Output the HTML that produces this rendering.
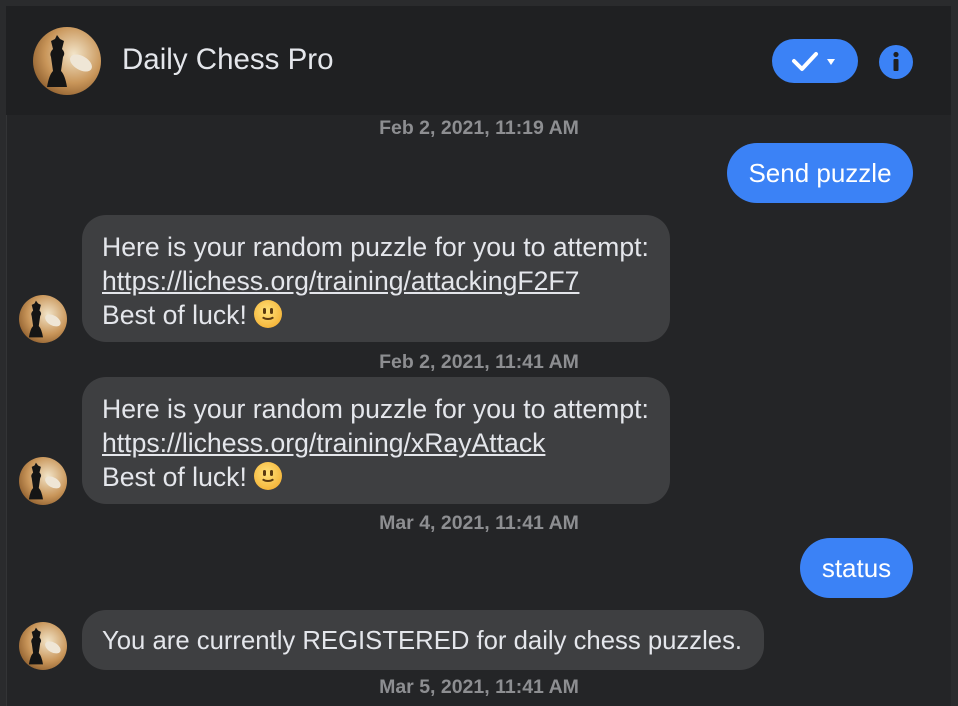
<!DOCTYPE html>
<html><head><meta charset="utf-8"><style>
*{margin:0;padding:0;box-sizing:border-box}
html,body{width:958px;height:692px;overflow:hidden;background:#2a2b2d;font-family:"Liberation Sans",Arial,sans-serif}
.frame{position:absolute;left:6px;top:6px;width:945px;height:700px;background:#242527;border-left:1px solid #333436;border-top:1px solid #38393b}
.header{position:absolute;left:6px;top:6px;width:945px;height:109px;background:#1f2022}
.abs{position:absolute}
.name{left:122px;top:43px;font-size:29.5px;color:#e4e6eb}
.ts{position:absolute;left:0;width:958px;text-align:center;color:#8d8e91;font-size:19.5px;font-weight:bold}
.bin{position:absolute;left:82px;background:#3e3f41;border-radius:24px;color:#e4e6eb;font-size:26.6px;line-height:34px;padding:14px 20px;white-space:nowrap}
.bin a{color:#e4e6eb;text-decoration:underline}
.bout{position:absolute;background:#3b82f6;color:#fff;font-size:26px;border-radius:30px;text-align:center;line-height:60px;height:60px}
.emo{display:inline-block;width:28px;height:28px;border-radius:50%;background:radial-gradient(circle at 45% 40%,#ffe27a,#f5b53a 75%);vertical-align:-4px;position:relative}
.emo:before,.emo:after{content:"";position:absolute;top:8px;width:3px;height:6px;background:#5a3a10;border-radius:2px}
.emo:before{left:9px}.emo:after{right:9px}
.emo i{position:absolute;left:6px;top:8px;width:16px;height:12px;border:2px solid transparent;border-bottom-color:#5a3a10;border-radius:50%}
</style></head><body>
<div class="frame"></div>
<div class="header"></div>
<svg width="0" height="0" style="position:absolute"><defs>
<radialGradient id="g" cx="60%" cy="40%" r="70%"><stop offset="0" stop-color="#f2e4c8"/><stop offset=".6" stop-color="#c9965a"/><stop offset="1" stop-color="#8a5a2a"/></radialGradient>
<symbol id="av" viewBox="0 0 68 68"><circle cx="34" cy="34" r="34" fill="url(#g)"/>
<ellipse cx="48" cy="36" rx="12" ry="7" fill="#efe6d6" transform="rotate(30 48 36)"/>
<path d="M14 60 Q16 48 20 44 L18 30 Q16 26 20 22 L18 14 L22 12 L24 8 L27 12 L31 14 L29 22 Q33 26 30 30 L28 44 Q32 48 34 60 Z" fill="#151515"/>
</symbol></defs></svg>
<svg class="abs" style="left:33px;top:27px" width="68" height="68"><use href="#av"/></svg>
<div class="abs name">Daily Chess Pro</div>
<div class="abs" style="left:772px;top:39px;width:86px;height:44px;border-radius:22px;background:#3b82f6"></div>
<svg class="abs" style="left:772px;top:39px" width="86" height="44"><path d="M22 22 L30 30 L44 15" stroke="#fff" stroke-width="4" fill="none" stroke-linecap="round" stroke-linejoin="round"/><path d="M55 20 L63 20 L59 26 Z" fill="#fff"/></svg>
<svg class="abs" style="left:878px;top:44px" width="36" height="36"><circle cx="18" cy="18" r="17" fill="#3b82f6"/><circle cx="18" cy="10.5" r="2.6" fill="#1f2022"/><rect x="15.5" y="15" width="5" height="12" rx="1" fill="#1f2022"/></svg>

<div class="ts" style="top:117px">Feb 2, 2021, 11:19 AM</div>
<div class="bout" style="left:727px;top:143px;width:186px">Send puzzle</div>

<svg class="abs" style="left:19px;top:295px" width="48" height="48"><use href="#av"/></svg>
<div class="bin" style="top:215px;width:588px;height:127px;padding-top:15px">Here is your random puzzle for you to attempt:<br><a>https://lichess.org/training/attackingF2F7</a><br>Best of luck! <span class="emo"><i></i></span></div>

<div class="ts" style="top:351px">Feb 2, 2021, 11:41 AM</div>
<svg class="abs" style="left:19px;top:457px" width="48" height="48"><use href="#av"/></svg>
<div class="bin" style="top:377px;width:588px;height:127px;padding-top:15px">Here is your random puzzle for you to attempt:<br><a>https://lichess.org/training/xRayAttack</a><br>Best of luck! <span class="emo"><i></i></span></div>

<div class="ts" style="top:512px">Mar 4, 2021, 11:41 AM</div>
<div class="bout" style="left:800px;top:538px;width:113px">status</div>

<svg class="abs" style="left:19px;top:622px" width="48" height="48"><use href="#av"/></svg>
<div class="bin" style="top:610px;width:682px;height:60px;padding:14px 20px;font-size:25.7px">You are currently REGISTERED for daily chess puzzles.</div>
<div class="ts" style="top:676px">Mar 5, 2021, 11:41 AM</div>
</body></html>
